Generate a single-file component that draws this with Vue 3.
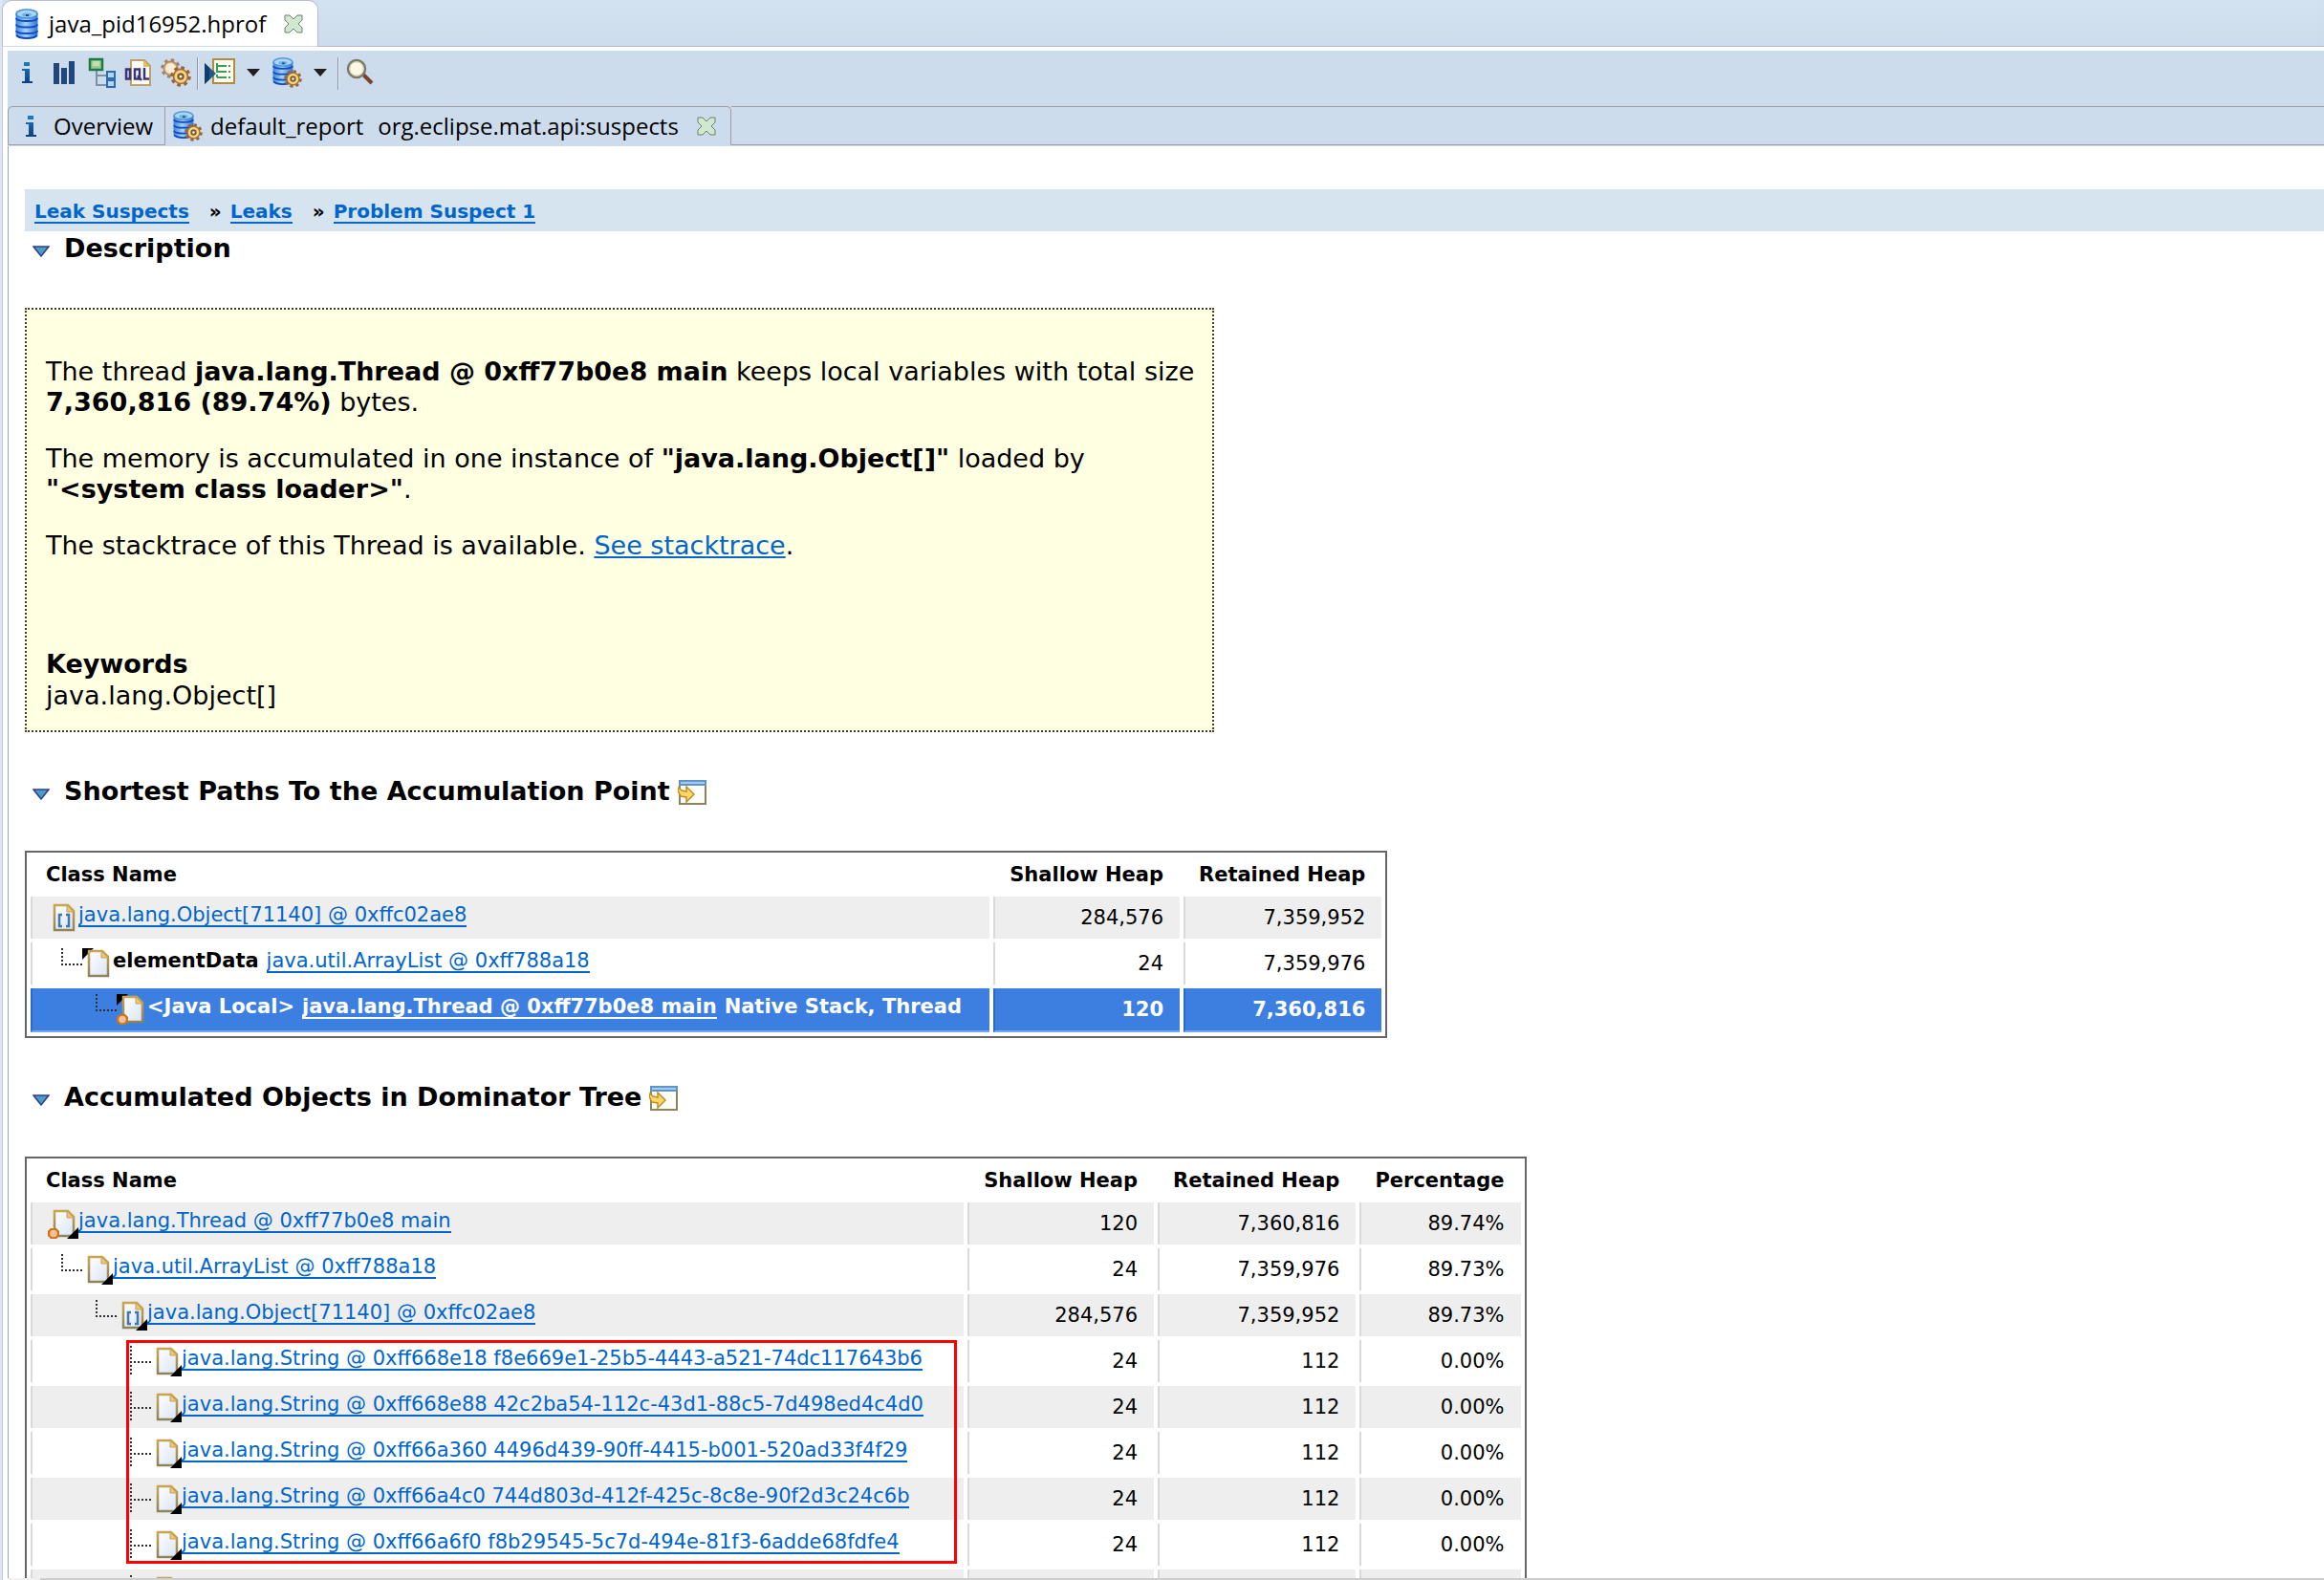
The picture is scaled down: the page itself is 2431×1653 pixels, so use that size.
<script setup>
import { ref } from 'vue'

const crumbs = ['Leak Suspects', 'Leaks', 'Problem Suspect 1']

const pathRows = [
  { level: 0, icon: 'array', link: 'java.lang.Object[71140] @ 0xffc02ae8', values: ['284,576', '7,359,952'] },
  { level: 1, icon: 'page', inbound: true, prefix: 'elementData', link: 'java.util.ArrayList @ 0xff788a18', values: ['24', '7,359,976'] },
  { level: 2, icon: 'page', inbound: true, root: true, prefix: '<Java Local>', link: 'java.lang.Thread @ 0xff77b0e8 main', suffix: 'Native Stack, Thread', values: ['120', '7,360,816'], selected: true }
]

const stringRow = (text, more = true) => ({ level: 3, icon: 'page', outbound: true, more, link: text, values: text ? ['24', '112', '0.00%'] : ['', '', ''] })

const treeRows = [
  { level: 0, icon: 'page', outbound: true, root: true, link: 'java.lang.Thread @ 0xff77b0e8 main', values: ['120', '7,360,816', '89.74%'] },
  { level: 1, icon: 'page', outbound: true, link: 'java.util.ArrayList @ 0xff788a18', values: ['24', '7,359,976', '89.73%'] },
  { level: 2, icon: 'array', outbound: true, link: 'java.lang.Object[71140] @ 0xffc02ae8', values: ['284,576', '7,359,952', '89.73%'] },
  stringRow('java.lang.String @ 0xff668e18 f8e669e1-25b5-4443-a521-74dc117643b6'),
  stringRow('java.lang.String @ 0xff668e88 42c2ba54-112c-43d1-88c5-7d498ed4c4d0'),
  stringRow('java.lang.String @ 0xff66a360 4496d439-90ff-4415-b001-520ad33f4f29'),
  stringRow('java.lang.String @ 0xff66a4c0 744d803d-412f-425c-8c8e-90f2d3c24c6b'),
  stringRow('java.lang.String @ 0xff66a6f0 f8b29545-5c7d-494e-81f3-6adde68fdfe4'),
  stringRow('')
]

const tables = [
  { id: 'paths', title: 'Shortest Paths To the Accumulation Point', heads: ['Shallow Heap', 'Retained Heap'], rows: pathRows },
  { id: 'tree', title: 'Accumulated Objects in Dominator Tree', heads: ['Shallow Heap', 'Retained Heap', 'Percentage'], rows: treeRows, marked: true }
]

const open = ref({ description: true, paths: true, tree: true })
const toggle = (id) => { open.value[id] = !open.value[id] }
</script>

<template>
  <svg class="sprite" aria-hidden="true">
    <defs>
      <linearGradient id="disk" x1="0" x2="1" y1="0" y2="0">
        <stop offset="0" stop-color="#3f86dc" />
        <stop offset="0.45" stop-color="#a4d4f4" />
        <stop offset="1" stop-color="#2f74d4" />
      </linearGradient>
      <linearGradient id="paper" x1="0" x2="1" y1="0" y2="1">
        <stop offset="0" stop-color="#ffffff" />
        <stop offset="1" stop-color="#d9e4f6" />
      </linearGradient>
      <linearGradient id="edge" x1="0" x2="0" y1="0" y2="1">
        <stop offset="0" stop-color="#c8a452" />
        <stop offset="1" stop-color="#8f8458" />
      </linearGradient>
      <linearGradient id="info" x1="0" x2="0" y1="0" y2="1">
        <stop offset="0" stop-color="#1c7cc0" />
        <stop offset="1" stop-color="#0c3f84" />
      </linearGradient>
    </defs>
    <symbol id="i-db" viewBox="0 0 24 32">
      <path d="M1 5v22c0 2 5 4 11 4s11-2 11-4V5z" fill="url(#disk)" stroke="#3a7cd0" />
      <path d="M1 10c0 2 5 3 11 3s11-1 11-3M1 16.500c0 2 5 3 11 3s11-1 11-3M1 23c0 2 5 3 11 3s11-1 11-3M1 28c2 2 6 3 11 3s9-1 11-3" fill="none" stroke="#0f49c4" stroke-width="2" />
      <ellipse cx="12" cy="5.500" rx="11" ry="4.500" fill="#a9d6f2" stroke="#4a90d8" stroke-width="1.500" />
      <ellipse cx="12" cy="6.500" rx="5" ry="2" fill="#6cb0e4" />
      <rect x="11" y="6" width="3" height="2" fill="#1c4f94" />
    </symbol>
    <symbol id="i-gear" viewBox="0 0 20 20">
      <circle cx="10" cy="10" r="8" fill="none" stroke="#95603c" stroke-width="3.500" stroke-dasharray="3.140 3.140" />
      <circle cx="10" cy="10" r="6.800" fill="#f8cf6c" stroke="#a86c30" stroke-width="1.500" />
      <circle cx="10" cy="10" r="4.500" fill="#fbe49a" />
      <circle cx="10" cy="10" r="2.400" fill="#fff8dc" stroke="#7a5a30" stroke-width="2" />
    </symbol>
    <symbol id="i-dbgear" viewBox="0 0 32 32">
      <use href="#i-db" x="0" y="0" width="24" height="29" />
      <use href="#i-gear" x="13" y="13" width="19" height="19" />
    </symbol>
    <symbol id="i-info" viewBox="0 0 32 32">
      <path d="M13 5h6v4h-6zM11 12h8v13h3v2H11v-2h3V14h-3z" fill="url(#info)" />
    </symbol>
    <symbol id="i-bars" viewBox="0 0 32 32">
      <path d="M5 6h6v22H5zM13 11h6v17h-6zM21 4h6v24h-6z" fill="#22457a" />
    </symbol>
    <symbol id="i-tree" viewBox="0 0 32 32">
      <path d="M11 14v15h8M11 19h8" fill="none" stroke="#8090a4" stroke-width="2" />
      <rect x="4" y="2" width="13" height="11" fill="#9ccc90" stroke="#1f7848" stroke-width="2.500" />
      <rect x="7" y="4" width="7" height="5" fill="#c0e0b0" />
      <rect x="22" y="15" width="8" height="7" fill="#b4d4f0" stroke="#2c6cb0" stroke-width="2" />
      <rect x="22" y="24" width="8" height="7" fill="#b4d4f0" stroke="#2c6cb0" stroke-width="2" />
      <path d="M18 19h3M18 29h3" stroke="#8090a4" stroke-width="2" />
    </symbol>
    <symbol id="i-oql" viewBox="0 0 32 32">
      <path d="M8 3h14l6 6v20H8z" fill="#fdfdf6" stroke="#bda06a" stroke-width="2" />
      <path d="M21 3v7h7z" fill="#e4bc58" />
      <path d="M3 12.500h4v10H3zM12 12.500h5v10h-5zM15 19l4 5M22 11v11.500h5" fill="none" stroke="#3c3478" stroke-width="2.500" />
    </symbol>
    <symbol id="i-gears" viewBox="0 0 32 32">
      <use href="#i-gear" x="0" y="1" width="21" height="21" opacity="0.750" />
      <circle cx="10.500" cy="11.500" r="5" fill="#f8ece0" />
      <use href="#i-gear" x="10" y="9" width="22" height="22" />
    </symbol>
    <symbol id="i-query" viewBox="0 0 32 32">
      <rect x="9" y="2" width="22" height="25" fill="#fffdf0" stroke="#b08c3c" stroke-width="2" />
      <path d="M13 6v17M13 9h14M13 15h14M13 21h14" fill="none" stroke="#3c9c5c" stroke-width="2" stroke-dasharray="10 2 3 2" />
      <path d="M0 6v22l12-11z" fill="#1c5c8c" />
      <path d="M0 6v22l5-5V11z" fill="#123c68" />
    </symbol>
    <symbol id="i-search" viewBox="0 0 32 32">
      <path d="M19 18l9 9" stroke="#7c4030" stroke-width="4" />
      <circle cx="12" cy="12" r="9" fill="#fdf8e4" stroke="#7c786c" stroke-width="2.500" />
      <circle cx="12" cy="12" r="7" fill="none" stroke="#d8d0b8" />
    </symbol>
    <symbol id="i-close" viewBox="0 0 20 20">
      <path d="M1 1h5l4 4 4-4h5v5l-4 4 4 4v5h-5l-4-4-4 4H1v-5l4-4-4-4z" fill="#cfe8cf" stroke="#6c806c" />
    </symbol>
    <symbol id="i-fold" viewBox="0 0 18 12">
      <path d="M1 1h16l-8 10z" fill="#4c9cc0" stroke="#2c3c94" stroke-width="1.500" />
    </symbol>
    <symbol id="i-window" viewBox="0 0 30 26">
      <rect x="2" y="1" width="27" height="24" fill="#fdfdf8" stroke="#8c845c" stroke-width="2" />
      <path d="M1 0h29v6H1z" fill="#5c94cc" />
      <path d="M3 3h25" stroke="#a8ccec" stroke-width="2" />
      <path d="M1 8l3 3 5 1V7l8 8-8 8v-5l-6-1-3-6z" fill="#fbd868" stroke="#c48c28" stroke-width="1.500" />
    </symbol>
    <symbol id="i-page" viewBox="0 0 32 32">
      <path d="M7 3h14l6 6v20H7z" fill="url(#paper)" stroke="url(#edge)" stroke-width="2.500" />
      <path d="M20 3v7h7z" fill="#e8c878" stroke="#c8a452" />
    </symbol>
    <symbol id="i-array" viewBox="0 0 32 32">
      <use href="#i-page" width="32" height="32" />
      <path d="M15 13h-3v12h3M19 13h3v12h-3" fill="none" stroke="#4078ac" stroke-width="2.500" />
    </symbol>
    <symbol id="i-out" viewBox="0 0 32 32"><path d="M32 20v12H20z" fill="#000" /></symbol>
    <symbol id="i-in" viewBox="0 0 32 32"><path d="M0 0h12L0 12z" fill="#000" /></symbol>
    <symbol id="i-root" viewBox="0 0 32 32">
      <path d="M3 21h6l3 3v5l-3 3H3l-3-3v-5z" fill="#c87424" />
      <circle cx="6" cy="26.500" r="3.800" fill="#fcc088" />
    </symbol>
    <symbol id="i-last" viewBox="0 0 36 32"><path d="M15 0v17M14 17h22" fill="none" stroke="#303030" stroke-width="2" stroke-dasharray="2 2" /></symbol>
    <symbol id="i-branch" viewBox="0 0 36 32"><path d="M15 0v32M18 17h18" fill="none" stroke="#303030" stroke-width="2" stroke-dasharray="2 2" /></symbol>
  </svg>

  <div class="app">
    <header class="editor-tabs">
      <div class="editor-tab">
        <svg class="db"><use href="#i-db" /></svg>
        <span>java_pid16952.hprof</span>
        <button class="close" aria-label="Close editor"><svg><use href="#i-close" /></svg></button>
      </div>
    </header>

    <div class="editor">
      <nav class="toolbar" aria-label="Editor tools">
        <button aria-label="Overview"><svg><use href="#i-info" /></svg></button>
        <button aria-label="Histogram"><svg><use href="#i-bars" /></svg></button>
        <button aria-label="Dominator tree"><svg><use href="#i-tree" /></svg></button>
        <button aria-label="OQL"><svg><use href="#i-oql" /></svg></button>
        <button aria-label="Thread overview"><svg><use href="#i-gears" /></svg></button>
        <i class="separator"></i>
        <button aria-label="Run report"><svg><use href="#i-query" /></svg></button>
        <button class="drop" aria-label="More reports"></button>
        <button aria-label="Query browser"><svg><use href="#i-dbgear" /></svg></button>
        <button class="drop" aria-label="More queries"></button>
        <i class="separator"></i>
        <button aria-label="Search"><svg><use href="#i-search" /></svg></button>
      </nav>

      <div class="views">
        <div class="view first">
          <svg class="icon"><use href="#i-info" /></svg>
          <span>Overview</span>
        </div>
        <div class="view current">
          <svg class="icon"><use href="#i-dbgear" /></svg>
          <span>default_report</span>
          <span>org.eclipse.mat.api:suspects</span>
          <button class="close" aria-label="Close view"><svg><use href="#i-close" /></svg></button>
        </div>
        <div class="views-rest"></div>
      </div>

      <main class="report">
        <nav class="crumbs" aria-label="Breadcrumb">
          <template v-for="(crumb, n) in crumbs" :key="crumb">
            <span v-if="n" class="arrow">»</span>
            <a class="link" href="#">{{ crumb }}</a>
          </template>
        </nav>

        <section>
          <h2>
            <button class="fold" aria-label="Toggle description" @click="toggle('description')"><svg><use href="#i-fold" /></svg></button>
            <span>Description</span>
          </h2>
          <div v-if="open.description" class="description">
            <p>The thread <b>java.lang.Thread @ 0xff77b0e8 main</b> keeps local variables with total size <b>7,360,816 (89.74%)</b> bytes.</p>
            <p>The memory is accumulated in one instance of <b>"java.lang.Object[]"</b> loaded by <b>"&lt;system class loader&gt;"</b>.</p>
            <p>The stacktrace of this Thread is available. <a href="#">See stacktrace</a>.</p>
            <div class="keywords"><b>Keywords</b><span>java.lang.Object[]</span></div>
          </div>
        </section>

        <section v-for="table in tables" :key="table.id">
          <h2>
            <button class="fold" :aria-label="'Toggle ' + table.title" @click="toggle(table.id)"><svg><use href="#i-fold" /></svg></button>
            <span>{{ table.title }}</span>
            <a class="open" href="#" :aria-label="'Open ' + table.title"><svg><use href="#i-window" /></svg></a>
          </h2>
          <div v-if="open[table.id]" class="table-wrap">
            <table :class="table.id">
              <thead>
                <tr>
                  <th class="name">Class Name</th>
                  <th v-for="head in table.heads" :key="head" :class="head.split(' ')[0].toLowerCase()">{{ head }}</th>
                </tr>
              </thead>
              <tbody>
                <tr v-for="(row, n) in table.rows" :key="n" :class="{ selected: row.selected }">
                  <td class="name">
                    <div class="node">
                      <i v-for="k in Math.max(row.level - 1, 0)" :key="k" class="indent"></i>
                      <svg v-if="row.level" class="branch"><use :href="row.more ? '#i-branch' : '#i-last'" /></svg>
                      <svg class="icon">
                        <use v-if="row.inbound" href="#i-in" />
                        <use :href="'#i-' + row.icon" />
                        <use v-if="row.outbound" href="#i-out" />
                        <use v-if="row.root" href="#i-root" />
                      </svg>
                      <b v-if="row.prefix" class="prefix">{{ row.prefix }}</b>
                      <a v-if="row.link" class="link" href="#">{{ row.link }}</a>
                      <b v-if="row.suffix" class="suffix">{{ row.suffix }}</b>
                    </div>
                  </td>
                  <td v-for="(value, k) in row.values" :key="k">{{ value }}</td>
                </tr>
              </tbody>
            </table>
            <div v-if="table.marked" class="marker"></div>
          </div>
        </section>
      </main>
      <div class="scrollbar"></div>
    </div>
  </div>
</template>

<style>
body {
  margin: 0;
  overflow: hidden;
}
</style>

<style scoped>
* {
  box-sizing: border-box;
}
.sprite {
  position: absolute;
  width: 0;
  height: 0;
}
svg {
  display: block;
  width: 100%;
  height: 100%;
}
button {
  padding: 0;
  border: 0;
  background: none;
}
.app {
  display: flex;
  flex-direction: column;
  height: 100vh;
  background: #fff;
  border-left: 2px solid #dfe4f4;
  font-family: "Open Sans", sans-serif;
  font-size: 24px;
  line-height: 32px;
  color: #000;
}
.editor-tabs {
  flex: none;
  display: flex;
  height: 49px;
  background: linear-gradient(#d3e2f0, #ccdcec);
  border-bottom: 1px solid #b4b8d0;
}
.editor-tab {
  display: flex;
  align-items: center;
  height: 49px;
  padding: 0 15px 0 13px;
  background: #fff;
  border: 1px solid #b8bcd0;
  border-bottom-color: #ccdcec;
  border-radius: 10px 10px 0 0;
}
.editor-tab .db {
  width: 24px;
  height: 32px;
  margin-right: 11px;
}
.close {
  width: 20px;
  height: 20px;
  margin-left: 19px;
}
.editor {
  flex: 1;
  min-height: 0;
  display: flex;
  flex-direction: column;
  padding: 4px 0 0 5px;
  border-left: 1px solid #c4c8d8;
}
.toolbar {
  flex: none;
  display: flex;
  align-items: flex-start;
  gap: 7px;
  height: 58px;
  padding: 7px 4px;
  background: #ccdcec;
}
.toolbar button {
  width: 32px;
  height: 32px;
}
.separator {
  width: 2px;
  height: 34px;
  margin: 0 -1px;
  background: #8c98a8;
  border-right: 1px solid #e4ecf4;
}
.toolbar .drop {
  display: grid;
  place-items: center;
  width: 24px;
}
.drop::before {
  content: "";
  border: 7px solid transparent;
  border-top: 8px solid #202020;
  border-bottom: 0;
}
.views {
  flex: none;
  display: flex;
  height: 42px;
  background: #ccdcec;
  border-bottom: 1px solid #ccdcec;
}
.view {
  display: flex;
  align-items: center;
  padding: 0 15px 0 7px;
  border: 1px solid #9c9ca4;
  border-left: 0;
}
.view.first {
  padding: 0 12px 0 7px;
  border-left: 1px solid #9c9ca4;
  border-top-left-radius: 5px;
}
.view.current {
  border-bottom-color: #ccdcec;
  border-top-right-radius: 5px;
}
.view .icon {
  width: 32px;
  height: 32px;
  margin-right: 8px;
}
.view span + span {
  margin-left: 15px;
}
.views-rest {
  flex: 1;
  border: 1px solid #9c9ca4;
  border-width: 1px 0;
}
.report {
  flex: 1;
  min-height: 0;
  overflow: hidden;
  padding: 45px 0 0 17px;
  border-left: 1px solid #98a4b8;
  font-family: "DejaVu Sans", Verdana, sans-serif;
  font-size: 27px;
}
a {
  color: #0066cc;
}
.link {
  display: block;
  height: 26px;
  overflow: hidden;
  border-bottom: 2px solid currentColor;
  text-decoration: none;
  white-space: nowrap;
}
.crumbs {
  display: flex;
  height: 44px;
  padding: 10px;
  background: #d6e4ef;
  font-size: 20px;
  font-weight: bold;
  line-height: 26px;
}
.arrow {
  margin: 0 9px 0 21px;
}
h2 {
  display: flex;
  margin: 0 0 46px;
  padding-left: 8px;
  font-size: 27px;
  line-height: 32px;
}
.crumbs + section {
  margin-top: 2px;
}
section {
  margin-bottom: 46px;
}
.fold {
  width: 18px;
  height: 12px;
  margin: 13px 15px 0 0;
}
.open {
  width: 30px;
  height: 26px;
  margin: 4px 0 0 8px;
}
.description {
  max-width: 1244px;
  padding: 22px 8px 20px 20px;
  border: 2px dotted #404030;
  background: #ffffe1;
}
p {
  margin: 27px 0;
}
b {
  white-space: nowrap;
}
.keywords {
  display: flex;
  flex-direction: column;
  gap: 1px;
  padding-top: 65px;
}
.table-wrap {
  position: relative;
  width: max-content;
}
table {
  border: 2px solid #666;
  border-spacing: 4px;
  font-size: 21px;
  line-height: 26px;
}
th,
td {
  padding: 0 17px 0 16px;
  text-align: right;
  white-space: nowrap;
}
th {
  height: 38px;
}
td {
  height: 44px;
  border-left: 2px solid #d9d9d9;
}
.name {
  text-align: left;
}
td.name {
  padding: 6px 16px;
}
.paths th.name {
  width: 1003px;
}
.tree th.name {
  width: 976px;
}
.shallow {
  width: 195px;
}
.retained {
  width: 207px;
}
.percentage {
  width: 166px;
}
tbody tr:nth-child(odd) td {
  background: #eee;
}
tbody tr.selected td {
  background: #3d7fe0;
  border-left-color: #2c68c4;
  border-bottom: 2px solid #74a8f0;
  color: #fff;
  font-weight: bold;
}
.selected a {
  color: #fff;
}
.node {
  display: flex;
  height: 32px;
}
.indent,
.branch {
  flex: none;
  width: 36px;
}
.node .icon {
  flex: none;
  width: 32px;
}
.prefix {
  margin-right: 8px;
}
.suffix {
  margin-left: 8px;
}
.marker {
  position: absolute;
  top: 192px;
  left: 106px;
  width: 869px;
  height: 234px;
  border: 3px solid #f00;
  pointer-events: none;
}
.scrollbar {
  flex: none;
  height: 2px;
  padding-left: 34px;
  background: linear-gradient(#cdcdcd, #cdcdcd) content-box, #f0f0f0;
}
</style>
